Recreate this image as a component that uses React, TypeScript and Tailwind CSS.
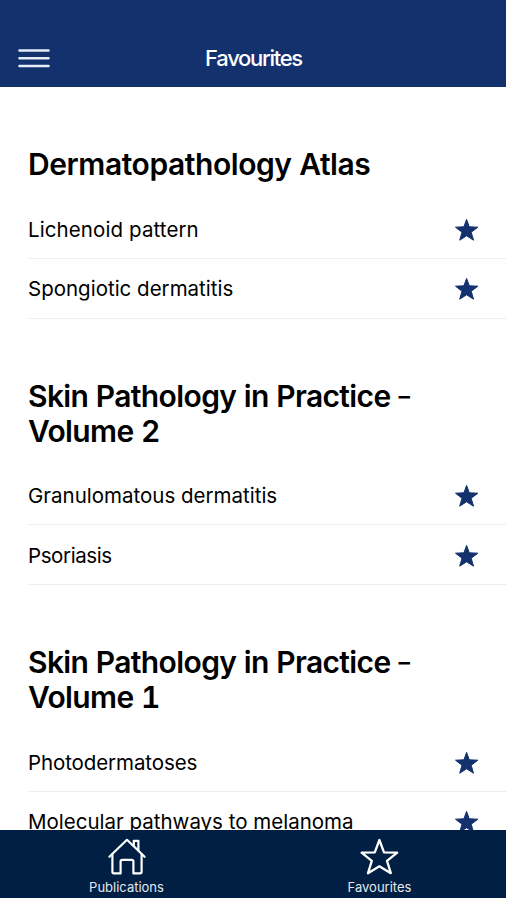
import React from "react";

type Section = {
  id: string;
  title: string;
  volume?: string;
  items: { name: string; textClass: string }[];
};

const SECTIONS: Section[] = [
  {
    id: "atlas",
    title: "Dermatopathology Atlas",
    items: [
      { name: "Lichenoid pattern", textClass: "tracking-[0.1px]" },
      { name: "Spongiotic dermatitis", textClass: "tracking-normal" },
    ],
  },
  {
    id: "volume-2",
    title: "Skin Pathology in Practice",
    volume: "Volume 2",
    items: [
      { name: "Granulomatous dermatitis", textClass: "tracking-normal" },
      { name: "Psoriasis", textClass: "tracking-[-0.4px]" },
    ],
  },
  {
    id: "volume-1",
    title: "Skin Pathology in Practice",
    volume: "Volume 1",
    items: [
      { name: "Photodermatoses", textClass: "tracking-[-0.1px]" },
      { name: "Molecular pathways to melanoma", textClass: "tracking-normal" },
    ],
  },
];

function MenuIcon() {
  return (
    <svg className="h-6 w-8" viewBox="0 0 32 24" stroke="#e6ecf8" strokeWidth="2.6" strokeLinecap="round">
      <path d="M1.5 4.5h29M1.5 12.2h29M1.5 20h29" />
    </svg>
  );
}

function StarIcon() {
  return (
    <svg className="h-6 w-6" viewBox="0 0 24 24" fill="#12316d">
      <path
        d="M11.6 1.4 14.3 8.8 22.9 9.2 16.2 14.2 18.5 22.2 11.6 17.8 4.7 22.2 7 14.2 0.5 9.2 8.9 8.8Z"
        stroke="#12316d"
        strokeWidth="1"
        strokeLinejoin="round"
      />
    </svg>
  );
}

function HomeIcon() {
  return (
    <svg
      className="h-10 w-10"
      viewBox="0 0 40 40"
      fill="none"
      stroke="white"
      strokeWidth="2.2"
      strokeLinecap="round"
      strokeLinejoin="round"
    >
      <path d="M2.4 20.8 20 3.8l17.6 17" />
      <path d="M5.4 18.4v17.4q0 1.6 1.6 1.6h6.6V25.4q0-1.6 1.6-1.6h9.6q1.6 0 1.6 1.6V37.4H33q1.6 0 1.6-1.6V18.4" />
      <path d="M26.8 9.8V4.8h4.6v9.6" />
    </svg>
  );
}

function StarOutlineIcon() {
  return (
    <svg
      className="h-10 w-10"
      viewBox="0 0 40 40"
      fill="none"
      stroke="white"
      strokeWidth="2.3"
      strokeLinejoin="round"
    >
      <path d="M19.4 4 24 16.3 37.2 16.7 27 24.9 30.8 37.2 19.4 30.3 8 37.2 11.8 24.9 1.6 16.7 14.8 16.3Z" />
    </svg>
  );
}

export default function App() {
  return (
    <div className="flex h-[900px] w-[507px] flex-col overflow-hidden bg-white pr-px pb-[2px] font-['Inter','Liberation_Sans',sans-serif] text-black">
      {/* Header */}
      <header className="grid h-[87px] shrink-0 grid-cols-3 items-end bg-[#12316d] px-[18px] pb-[17px]">
        <button aria-label="Menu" className="w-8">
          <MenuIcon />
        </button>
        <h1 className="pl-px text-center text-[22px] leading-6 font-medium tracking-[-1.3px] text-white">
          Favourites
        </h1>
      </header>

      {/* Favourites list */}
      <main className="min-h-0 flex-1 overflow-hidden pl-7">
        {SECTIONS.map((section) => (
          <section key={section.id} className="pt-[60.2px]">
            <h2 className="mb-[17px] text-[30px] leading-[35px] font-semibold tracking-[-0.43px] tabular-nums">
              {section.volume ? (
                <span className="block tracking-[-0.62px]">
                  <span className="flex items-center gap-2">
                    {section.title}
                    <span className="text-[23px]">–</span>
                  </span>
                  {section.volume}
                </span>
              ) : (
                section.title
              )}
            </h2>
            <ul>
              {section.items.map((item) => (
                <li
                  key={item.name}
                  className="flex h-[59.7px] items-center justify-between border-b border-[#eceeef] pt-0.5 pr-[27px]"
                >
                  <span className={`text-[20.5px] leading-6 ${item.textClass}`}>{item.name}</span>
                  <StarIcon />
                </li>
              ))}
            </ul>
          </section>
        ))}
      </main>

      {/* Tab bar */}
      <nav className="grid h-[68px] shrink-0 grid-cols-2 bg-[#001f42] text-[13px] leading-4 text-[#e4e9f0]">
        <button className="flex flex-col items-center pt-1.5">
          <HomeIcon />
          <span className="mt-[3px]">Publications</span>
        </button>
        <button className="flex flex-col items-center pt-1.5">
          <StarOutlineIcon />
          <span className="mt-[3px]">Favourites</span>
        </button>
      </nav>
    </div>
  );
}
